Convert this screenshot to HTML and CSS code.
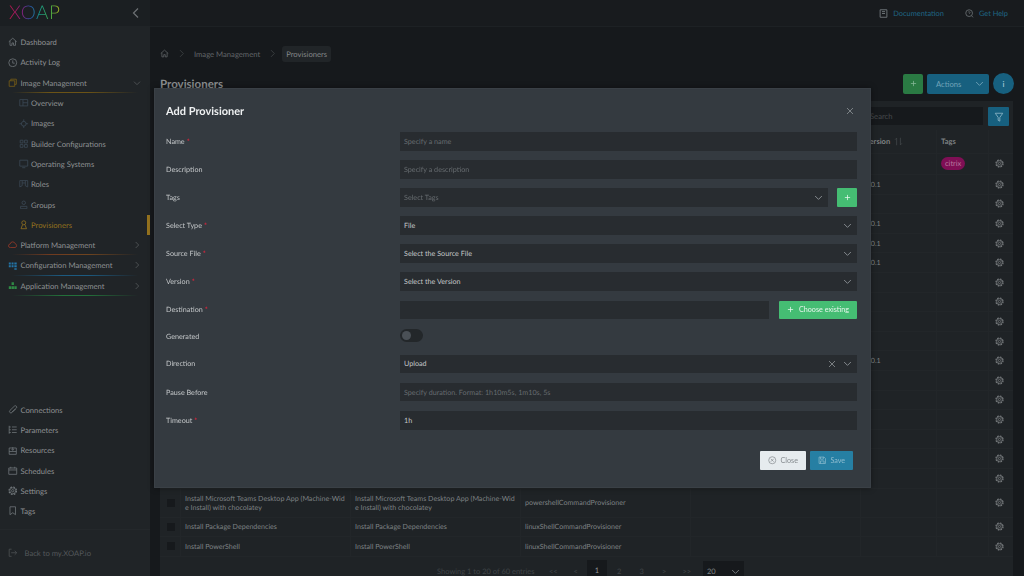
FILE: index.html
```html
<!DOCTYPE html>
<html lang="en">
<head>
  <meta charset="UTF-8">
  <title>Provisioners</title>
  <link rel="stylesheet" href="styles.css">
</head>
<body>
  <svg class="sprites" width="0" height="0">
    <symbol id="gear" viewBox="0 0 24 24"><circle cx="12" cy="12" r="9.500" fill="none" stroke="currentColor" stroke-width="3" stroke-dasharray="4.500 2.960"/><circle cx="12" cy="12" r="7.500" fill="none" stroke="currentColor" stroke-width="2"/><circle cx="12" cy="12" r="3" fill="none" stroke="currentColor" stroke-width="2"/></symbol>
    <symbol id="chev-down" viewBox="0 0 12 12"><path d="M1.500 4l4.500 4.500L10.500 4" fill="none" stroke="currentColor" stroke-width="1.200"/></symbol>
    <symbol id="chev-right" viewBox="0 0 12 12"><path d="M4 1.500L8.500 6 4 10.500" fill="none" stroke="currentColor" stroke-width="1.200"/></symbol>
    <symbol id="cross" viewBox="0 0 12 12"><path d="M1.500 1.500l9 9M10.500 1.500l-9 9" fill="none" stroke="currentColor" stroke-width="1.200"/></symbol>
    <symbol id="plus" viewBox="0 0 12 12"><path d="M6 1.500v9M1.500 6h9" fill="none" stroke="currentColor" stroke-width="1.300"/></symbol>
    <symbol id="box" viewBox="0 0 12 12"><path d="M1.500 1.500h3.500v3.500h-3.500zM7 1.500h3.500v3.500H7zM1.500 7h3.500v3.500h-3.500zM7 7h3.500v3.500H7z" fill="none" stroke="currentColor"/></symbol>
  </svg>

  <div class="app">
    <aside class="sidebar">
      <div class="brand">
        <span class="logo">XOAP</span>
        <svg class="collapse" viewBox="0 0 12 12"><use href="#chev-right" transform="matrix(-1 0 0 1 12 0)"/></svg>
      </div>
      <nav class="nav">
        <a class="item"><svg class="ico" viewBox="0 0 12 12"><path d="M1 6l5-4.500L11 6M2.500 5v5.500h2.500V7.500h2v3h2.500V5" fill="none" stroke="currentColor"/></svg>Dashboard</a>
        <a class="item"><svg class="ico" viewBox="0 0 12 12"><circle cx="6" cy="6" r="5" fill="none" stroke="currentColor"/><path d="M6 3v3.500h2.500" fill="none" stroke="currentColor"/></svg>Activity Log</a>
        <a class="item group amber"><svg class="ico" viewBox="0 0 12 12"><path d="M3.500 3.500V1.500h7v6.500h-2M1.500 3.500h7v7h-7z" fill="none" stroke="currentColor"/></svg><span class="group-label">Image Management</span><svg class="caret" viewBox="0 0 12 12"><use href="#chev-down"/></svg></a>
        <a class="item sub"><svg class="ico" viewBox="0 0 12 12"><path d="M1 2h10v8H1zM5 2v8M5 6h6" fill="none" stroke="currentColor"/></svg>Overview</a>
        <a class="item sub"><svg class="ico" viewBox="0 0 12 12"><circle cx="6" cy="6" r="3" fill="none" stroke="currentColor"/><path d="M6 .5v3M6 8.500v3M.5 6h3M8.500 6h3" stroke="currentColor"/></svg>Images</a>
        <a class="item sub"><svg class="ico" viewBox="0 0 12 12"><use href="#box"/></svg>Builder Configurations</a>
        <a class="item sub"><svg class="ico" viewBox="0 0 12 12"><path d="M1 1.500h10v7.500H1zM4 11h4" fill="none" stroke="currentColor"/></svg>Operating Systems</a>
        <a class="item sub"><svg class="ico" viewBox="0 0 12 12"><path d="M1 2h10v8l-3-1.500V2M1 2v8l3-1.500V2M4 5h4" fill="none" stroke="currentColor"/></svg>Roles</a>
        <a class="item sub"><svg class="ico" viewBox="0 0 12 12"><circle cx="6" cy="3.500" r="2.200" fill="none" stroke="currentColor"/><path d="M2 11V8h8v3z" fill="none" stroke="currentColor"/></svg>Groups</a>
        <a class="item sub current"><svg class="ico" viewBox="0 0 12 12"><circle cx="6" cy="3.500" r="2.500" fill="none" stroke="currentColor"/><path d="M4.500 6L2.500 11h7l-2-5" fill="none" stroke="currentColor"/></svg>Provisioners</a>
        <a class="item group red"><svg class="ico" viewBox="0 0 12 12"><path d="M3 9.500a2.200 2.200 0 0 1-.3-4.400 3.300 3.300 0 0 1 6.400-.4A2.500 2.500 0 0 1 9 9.500z" fill="none" stroke="currentColor"/></svg><span class="group-label">Platform Management</span><svg class="caret" viewBox="0 0 12 12"><use href="#chev-right"/></svg></a>
        <a class="item group blue"><svg class="ico" viewBox="0 0 12 12"><path d="M1 2h2.500v2.500H1zM4.500 2h2.500v2.500H4.500zM8 2h3v2.500H8zM1 5.500h2.500V8H1zM4.500 5.500h2.500V8H4.500zM8 5.500h3V8H8zM8 9h3v2H8z" fill="currentColor"/></svg><span class="group-label">Configuration Management</span><svg class="caret" viewBox="0 0 12 12"><use href="#chev-right"/></svg></a>
        <a class="item group green"><svg class="ico" viewBox="0 0 12 12"><path d="M4.500 1.500h3V5h-3zM1 6.500h3V10H1zM4.500 6.500h3V10h-3zM8 6.500h3V10H8z" fill="currentColor"/></svg><span class="group-label">Application Management</span><svg class="caret" viewBox="0 0 12 12"><use href="#chev-right"/></svg></a>
      </nav>
      <nav class="nav nav-bottom">
        <a class="item"><svg class="ico" viewBox="0 0 12 12"><path d="M9.500 5L5 9.500a1.800 1.800 0 0 1-2.600-2.600L8 1.500a1.200 1.200 0 0 1 2.500 2.500L5 9" fill="none" stroke="currentColor"/></svg>Connections</a>
        <a class="item"><svg class="ico" viewBox="0 0 12 12"><path d="M1.500 1v10M1.500 2.500h2M1.500 6h2M1.500 9.500h2M5 2.500h6M5 6h6M5 9.500h6" fill="none" stroke="currentColor"/></svg>Parameters</a>
        <a class="item"><svg class="ico" viewBox="0 0 12 12"><path d="M1.500 2.500h9v8h-9zM1.500 7h9M6 1.500v4M4.500 4L6 5.500 7.500 4" fill="none" stroke="currentColor"/></svg>Resources</a>
        <a class="item"><svg class="ico" viewBox="0 0 12 12"><path d="M1 2.500h10V10.500H1zM1 5h10M3.500 1v2M8.500 1v2" fill="none" stroke="currentColor"/></svg>Schedules</a>
        <a class="item"><svg class="ico"><use href="#gear"/></svg>Settings</a>
        <a class="item"><svg class="ico" viewBox="0 0 12 12"><path d="M2.500 1h7v10L6 8.500 2.500 11z" fill="none" stroke="currentColor"/></svg>Tags</a>
      </nav>
      <div class="back">
        <svg class="ico" viewBox="0 0 12 12"><path d="M4.500 1.500h-3v9h3M4 6h7M8.500 3.500L11 6 8.500 8.500" fill="none" stroke="currentColor"/></svg>
        <span>Back to my.XOAP.io</span>
      </div>
    </aside>

    <main class="main">
      <header class="topbar">
        <a class="toplink"><svg class="top-ico" viewBox="0 0 12 12"><path d="M1.500 1h9v10h-9zM4 3.500h4M4 6h4" fill="none" stroke="#6c7276" stroke-width="1.300"/></svg>Documentation</a>
        <a class="toplink"><svg class="top-ico" viewBox="0 0 12 12"><circle cx="5.500" cy="5.500" r="4.500" fill="none" stroke="#6c7276" stroke-width="1.100"/><path d="M8.500 9l2.500 2M4.500 4.500a1 1 0 1 1 1.500 1v1" fill="none" stroke="#6c7276"/></svg>Get Help</a>
      </header>

      <div class="crumbs">
        <svg class="crumb-home" viewBox="0 0 12 12"><path d="M1 6l5-4.500L11 6M2.500 5v5.500h2.500V7.500h2v3h2.500V5" fill="none" stroke="currentColor"/></svg>
        <svg class="crumb-sep" viewBox="0 0 12 12"><use href="#chev-right"/></svg>
        <span>Image Management</span>
        <svg class="crumb-sep" viewBox="0 0 12 12"><use href="#chev-right"/></svg>
        <span class="crumb-current">Provisioners</span>
      </div>

      <div class="page-head">
        <h1>Provisioners</h1>
        <div class="page-actions">
          <button class="btn-add"><svg viewBox="0 0 12 12"><use href="#plus"/></svg></button>
          <button class="btn-actions">Actions<svg viewBox="0 0 12 12"><use href="#chev-down"/></svg></button>
          <button class="btn-info">i</button>
        </div>
      </div>

      <section class="card">
        <div class="card-tools">
          <div class="search">Search</div>
          <button class="btn-filter"><svg viewBox="0 0 12 12"><path d="M1.500 1.500h9L7 6.500V11L5 10V6.500z" fill="none" stroke="currentColor"/></svg></button>
        </div>
        <table class="grid">
          <colgroup><col class="c-check"><col class="c-wide"><col class="c-wide"><col class="c-wide"><col class="c-wide"><col class="c-ver"><col class="c-tags"><col></colgroup>
          <thead>
            <tr><th></th><th>Name</th><th>Display Name</th><th>Type</th><th>Description</th><th class="ver-head">Version<svg viewBox="0 0 12 12"><path d="M3.500 11V1.500L1.500 3.500M8.500 1v9.500l2-2" fill="none" stroke="currentColor"/></svg></th><th>Tags</th><th></th></tr>
          </thead>
          <tbody>
            <tr class="first"><td></td><td></td><td></td><td></td><td></td><td></td><td><span class="tag">citrix</span></td><td><svg class="gear"><use href="#gear"/></svg></td></tr>
            <tr><td></td><td></td><td></td><td></td><td></td><td class="ver">1.0.1</td><td></td><td><svg class="gear"><use href="#gear"/></svg></td></tr>
            <tr><td></td><td></td><td></td><td></td><td></td><td></td><td></td><td><svg class="gear"><use href="#gear"/></svg></td></tr>
            <tr><td></td><td></td><td></td><td></td><td></td><td class="ver">1.0.1</td><td></td><td><svg class="gear"><use href="#gear"/></svg></td></tr>
            <tr><td></td><td></td><td></td><td></td><td></td><td class="ver">1.0.1</td><td></td><td><svg class="gear"><use href="#gear"/></svg></td></tr>
            <tr><td></td><td></td><td></td><td></td><td></td><td class="ver">1.0.1</td><td></td><td><svg class="gear"><use href="#gear"/></svg></td></tr>
            <tr><td></td><td></td><td></td><td></td><td></td><td></td><td></td><td><svg class="gear"><use href="#gear"/></svg></td></tr>
            <tr><td></td><td></td><td></td><td></td><td></td><td></td><td></td><td><svg class="gear"><use href="#gear"/></svg></td></tr>
            <tr><td></td><td></td><td></td><td></td><td></td><td></td><td></td><td><svg class="gear"><use href="#gear"/></svg></td></tr>
            <tr><td></td><td></td><td></td><td></td><td></td><td></td><td></td><td><svg class="gear"><use href="#gear"/></svg></td></tr>
            <tr><td></td><td></td><td></td><td></td><td></td><td class="ver">1.0.1</td><td></td><td><svg class="gear"><use href="#gear"/></svg></td></tr>
            <tr><td></td><td></td><td></td><td></td><td></td><td></td><td></td><td><svg class="gear"><use href="#gear"/></svg></td></tr>
            <tr><td></td><td></td><td></td><td></td><td></td><td></td><td></td><td><svg class="gear"><use href="#gear"/></svg></td></tr>
            <tr><td></td><td></td><td></td><td></td><td></td><td></td><td></td><td><svg class="gear"><use href="#gear"/></svg></td></tr>
            <tr><td></td><td></td><td></td><td></td><td></td><td></td><td></td><td><svg class="gear"><use href="#gear"/></svg></td></tr>
            <tr><td></td><td></td><td></td><td></td><td></td><td></td><td></td><td><svg class="gear"><use href="#gear"/></svg></td></tr>
            <tr><td></td><td></td><td></td><td></td><td></td><td></td><td></td><td><svg class="gear"><use href="#gear"/></svg></td></tr>
            <tr class="tall"><td><span class="check"></span></td><td class="name">Install Microsoft Teams Desktop App (Machine-Wide Install) with chocolatey</td><td class="name">Install Microsoft Teams Desktop App (Machine-Wide Install) with chocolatey</td><td>powershellCommandProvisioner</td><td></td><td></td><td></td><td><svg class="gear"><use href="#gear"/></svg></td></tr>
            <tr><td><span class="check"></span></td><td>Install Package Dependencies</td><td>Install Package Dependencies</td><td>linuxShellCommandProvisioner</td><td></td><td></td><td></td><td><svg class="gear"><use href="#gear"/></svg></td></tr>
            <tr><td><span class="check"></span></td><td>Install PowerShell</td><td>Install PowerShell</td><td>linuxShellCommandProvisioner</td><td></td><td></td><td></td><td><svg class="gear"><use href="#gear"/></svg></td></tr>
          </tbody>
        </table>
        <div class="pager">
          <span class="showing">Showing 1 to 20 of 60 entries</span>
          <span class="pg">&lt;&lt;</span><span class="pg">&lt;</span><span class="pg pg-on">1</span><span class="pg">2</span><span class="pg">3</span><span class="pg">&gt;</span><span class="pg">&gt;&gt;</span>
          <span class="pg-size">20<svg viewBox="0 0 12 12"><use href="#chev-down"/></svg></span>
        </div>
      </section>
    </main>
  </div>

  <div class="modal">
    <div class="modal-head">
      <h2>Add Provisioner</h2>
      <svg class="modal-x" viewBox="0 0 12 12"><use href="#cross"/></svg>
    </div>
    <form class="form">
      <label class="lbl">Name<b>*</b></label>
      <div class="field ph">Specify a name</div>

      <label class="lbl">Description</label>
      <div class="field ph">Specify a description</div>

      <label class="lbl">Tags</label>
      <div class="line">
        <div class="field ph">Select Tags<svg class="dd" viewBox="0 0 12 12"><use href="#chev-down"/></svg></div>
        <button type="button" class="btn-green square"><svg viewBox="0 0 12 12"><use href="#plus"/></svg></button>
      </div>

      <label class="lbl">Select Type<b>*</b></label>
      <div class="field">File<svg class="dd" viewBox="0 0 12 12"><use href="#chev-down"/></svg></div>

      <label class="lbl">Source File<b>*</b></label>
      <div class="field">Select the Source File<svg class="dd" viewBox="0 0 12 12"><use href="#chev-down"/></svg></div>

      <label class="lbl">Version<b>*</b></label>
      <div class="field">Select the Version<svg class="dd" viewBox="0 0 12 12"><use href="#chev-down"/></svg></div>

      <label class="lbl">Destination<b>*</b></label>
      <div class="line wide-gap">
        <div class="field"></div>
        <button type="button" class="btn-green choose"><svg viewBox="0 0 12 12"><use href="#plus"/></svg>Choose existing</button>
      </div>

      <label class="lbl">Generated</label>
      <div class="switch-row"><span class="switch"><span class="knob"></span></span></div>

      <label class="lbl">Direction</label>
      <div class="field">Upload<svg class="clear" viewBox="0 0 12 12"><use href="#cross"/></svg><svg class="dd" viewBox="0 0 12 12"><use href="#chev-down"/></svg></div>

      <label class="lbl">Pause Before</label>
      <div class="field ph">Specify duration. Format: 1h10m5s, 1m10s, 5s</div>

      <label class="lbl">Timeout<b>*</b></label>
      <div class="field">1h</div>
    </form>
    <div class="modal-foot">
      <button class="btn-close"><svg viewBox="0 0 12 12"><circle cx="6" cy="6" r="5" fill="none" stroke="currentColor"/><path d="M4 4l4 4M8 4l-4 4" stroke="currentColor"/></svg>Close</button>
      <button class="btn-save"><svg viewBox="0 0 12 12"><path d="M1.500 1.500h7l2 2v7h-9zM3.500 1.500v3h4v-3M3.500 10.500V7h5v3.500" fill="none" stroke="currentColor"/></svg>Save</button>
    </div>
  </div>
</body>
</html>
```

FILE: styles.css
```css
* {
  box-sizing: border-box;
}
html, body {
  margin: 0;
  height: 576px;
  overflow: hidden;
}
body {
  font-family: Lato, "Open Sans", sans-serif;
  font-size: 7.650px;
  text-rendering: geometricPrecision;
  background: #16191c;
  color: #8f9294;
}
button {
  font: inherit;
  border: 0;
  padding: 0;
}
.sprites {
  position: absolute;
}
.app {
  display: flex;
  height: 576px;
}

/* sidebar */
.sidebar {
  width: 150px;
  flex: none;
  display: flex;
  flex-direction: column;
  background: #202427;
}
.brand {
  height: 26px;
  flex: none;
  display: flex;
  align-items: center;
  justify-content: space-between;
  padding: 0 8px 0 9px;
  background: #1b1f22;
}
.logo {
  font-weight: 300;
  font-size: 19px;
  line-height: 26px;
  letter-spacing: .5px;
  background: linear-gradient(90deg, #c0184a, #8a1e7a 25%, #2a55a8 42%, #179a8a 60%, #3fa848 80%, #a8b01e);
  -webkit-background-clip: text;
  background-clip: text;
  color: transparent;
}
.collapse {
  width: 12px;
  height: 12px;
  color: #6d7174;
}
.nav {
  padding-top: 6px;
}
.nav-bottom {
  margin-top: auto;
  padding-top: 0;
  padding-bottom: 8px;
}
.nav-bottom .item {
  height: 20.200px;
}
.item {
  position: relative;
  display: flex;
  align-items: center;
  height: 20.300px;
  padding-left: 8px;
}
.ico {
  width: 9.500px;
  height: 9.500px;
  margin-right: 3px;
  flex: none;
  color: #70767a;
}
.sub {
  padding-left: 19px;
}
.sub .ico {
  margin-right: 2.500px;
  color: #3c4a56;
}
.current, .current .ico {
  color: #94721e;
}
.current::after {
  content: "";
  position: absolute;
  right: 0;
  top: 0;
  width: 3px;
  height: 100%;
  background: #94721e;
}
.caret {
  width: 8px;
  height: 8px;
  margin-left: auto;
  margin-right: 9px;
  color: #55595c;
}
.group::before {
  content: "";
  position: absolute;
  left: 12px;
  right: 12px;
  bottom: 0;
  height: 1px;
}
.amber::before { background: linear-gradient(90deg, transparent, #6b5316 30%, #6b5316 60%, transparent); }
.red::before { background: linear-gradient(90deg, transparent, #6f3a1f 30%, #6f441f 60%, transparent); }
.blue::before { background: linear-gradient(90deg, transparent, #1c5a80 40%, #1c5a80 60%, transparent); }
.green::before { background: linear-gradient(90deg, transparent, #23703a 40%, #23703a 60%, transparent); }
.amber .ico { color: #7a5f16; }
.red .ico { color: #9a3a28; }
.blue .ico { color: #2375a8; }
.green .ico { color: #2f8a45; }
.back {
  height: 47px;
  flex: none;
  display: flex;
  align-items: center;
  padding-left: 8px;
  border-top: 1px solid #24282b;
  color: #54585b;
}
.back .ico {
  color: #4d5154;
  margin-right: 7px;
}

/* main */
.main {
  flex: 1;
  min-width: 0;
  display: flex;
  flex-direction: column;
}
.topbar {
  height: 27px;
  flex: none;
  display: flex;
  justify-content: flex-end;
  align-items: center;
  gap: 21px;
  padding: 1px 16px 0 0;
  background: #181b1e;
  border-bottom: 1px solid #1d2124;
}
.toplink {
  display: flex;
  align-items: center;
  font-size: 7.400px;
  color: #1f6685;
}
.top-ico {
  width: 9px;
  height: 9px;
  margin-right: 5px;
}
.crumbs {
  display: flex;
  align-items: center;
  margin: 18px 0 0 10px;
  height: 17px;
  color: #63676a;
}
.crumb-home {
  width: 9px;
  height: 9px;
  color: #63676a;
}
.crumb-sep {
  width: 9px;
  height: 9px;
  margin: 0 8px;
  color: #3a3e41;
}
.crumb-current {
  margin-left: -3px;
  padding: 3px 4px;
  border-radius: 3px;
  background: #212528;
  color: #85888a;
}
.page-head {
  display: flex;
  justify-content: space-between;
  align-items: center;
  height: 21px;
  margin: 11px 10px 0 10px;
}
h1 {
  margin: 2px 0 0;
  font-size: 11.500px;
  font-weight: 700;
  color: #8b8e90;
}
.page-actions {
  display: flex;
  align-items: center;
  gap: 4px;
}
.btn-add {
  width: 20px;
  height: 20px;
  border-radius: 2px;
  background: #2a7a43;
  color: #86b896;
  display: flex;
  align-items: center;
  justify-content: center;
}
.btn-add svg {
  width: 7px;
  height: 7px;
}
.btn-actions {
  width: 62px;
  height: 20px;
  border-radius: 2px;
  background: #17607f;
  color: #71a3b8;
  display: flex;
  align-items: center;
  justify-content: space-between;
  padding: 0 5px 0 9px;
}
.btn-actions svg {
  width: 9px;
  height: 9px;
}
.btn-info {
  width: 21px;
  height: 21px;
  border-radius: 50%;
  background: #17607f;
  color: #9dc2d1;
  font-weight: 700;
}
.card {
  margin: 7px 11px 0 10px;
  background: #1f2326;
  flex: 1;
  min-height: 0;
}
.card-tools {
  display: flex;
  justify-content: flex-end;
  gap: 5px;
  padding: 6px 4px 0 0;
  height: 29px;
}
.search {
  width: 180px;
  height: 18px;
  background: #16191c;
  color: #46494c;
  line-height: 18px;
  text-indent: 67px;
}
.btn-filter {
  width: 21px;
  height: 19px;
  border-radius: 1px;
  background: #17607f;
  color: #8db6c7;
  display: flex;
  align-items: center;
  justify-content: center;
}
.btn-filter svg {
  width: 10px;
  height: 10px;
}
.grid {
  width: 100%;
  table-layout: fixed;
  border-collapse: collapse;
  font-size: 7.100px;
  line-height: 9px;
}
.c-check { width: 20px; }
.c-wide { width: 170px; }
.c-ver { width: 76px; }
.c-tags { width: 52px; }
th {
  height: 23px;
  text-align: left;
  font-weight: 700;
  color: #7e8284;
  font-size: 7.500px;
  padding: 0 4.500px;
  border-bottom: 1px solid #222629;
}
th + th, td + td {
  border-left: 1px solid #222629;
}
td {
  height: 19.600px;
  padding: 0 4.500px;
  border-bottom: 1px solid #222629;
  color: #7d8183;
}
.first td {
  height: 21.500px;
}
.tall td {
  height: 29px;
}
.name {
  word-break: break-all;
}
.ver-head {
  white-space: nowrap;
}
.ver-head svg {
  width: 9px;
  height: 9px;
  margin-left: 4px;
  vertical-align: -2px;
  color: #44484b;
}
.tag {
  display: inline-block;
  padding: 2px 4px;
  border-radius: 7px;
  background: #7f0f55;
  color: #b77a9f;
  font-size: 7.500px;
}
.gear {
  display: block;
  width: 9px;
  height: 9px;
  margin: 0 auto;
  color: #7a7e80;
}
td:last-child {
  padding: 0 2px 0 0;
}
.check {
  display: block;
  width: 8px;
  height: 8px;
  margin-left: 2px;
  background: #16191c;
}
.pager {
  display: flex;
  align-items: center;
  height: 22px;
  padding-top: 7px;
  margin-left: 277px;
  font-size: 7.500px;
  color: #3f4346;
}
.showing {
  width: 105px;
}
.pg {
  width: 22.500px;
  text-align: center;
}
.pg-on {
  width: 20px;
  margin: 0 1px 0 0;
  height: 22px;
  line-height: 22px;
  background: #16191c;
  color: #8f9294;
}
.pg-size {
  display: flex;
  align-items: center;
  justify-content: space-between;
  width: 41px;
  height: 20px;
  margin-left: 5px;
  padding: 0 4px;
  background: #16191c;
  color: #7d8183;
}
.pg-size svg {
  width: 9px;
  height: 9px;
}

/* modal */
.modal {
  position: fixed;
  left: 154px;
  top: 88px;
  width: 717px;
  height: 400px;
  background: #343a40;
  border: 1px solid #3a4046;
  font-size: 7.200px;
  color: #c3c6c8;
  box-shadow: 0 0 6px rgba(0, 0, 0, .4);
}
.modal-head {
  display: flex;
  justify-content: space-between;
  align-items: center;
  padding: 1px 16px 0 11px;
  height: 43px;
}
h2 {
  margin: 0;
  font-size: 11px;
  font-weight: 700;
  color: #eef0f1;
}
.modal-x {
  width: 8px;
  height: 8px;
  color: #8e9397;
}
.form {
  display: grid;
  grid-template-columns: 234px 457px;
  row-gap: 9.300px;
  padding-left: 11px;
  align-items: center;
}
.lbl {
  color: #c3c6c8;
}
.lbl b {
  margin-left: 2px;
  color: #d8243c;
  font-weight: 700;
}
.field {
  position: relative;
  display: flex;
  align-items: center;
  flex: 1;
  height: 18.800px;
  padding-left: 4px;
  background: #282c30;
  color: #c3c6c8;
}
.ph {
  color: #666b6f;
}
.dd {
  position: absolute;
  right: 5px;
  width: 9px;
  height: 9px;
  color: #8e9397;
}
.clear {
  position: absolute;
  right: 21px;
  width: 8px;
  height: 8px;
  color: #8e9397;
}
.line {
  display: flex;
  gap: 9px;
}
.wide-gap {
  gap: 10px;
}
.btn-green {
  background: #45bd73;
  color: #e6f6ec;
  border-radius: 1px;
  display: flex;
  align-items: center;
  justify-content: center;
  flex: none;
}
.btn-green svg {
  width: 7px;
  height: 7px;
}
.square {
  width: 20px;
  height: 18.800px;
}
.choose {
  width: 78px;
  height: 18.800px;
}
.choose svg {
  margin-right: 5px;
}
.switch-row {
  height: 14.600px;
  margin-bottom: 2px;
}
.switch {
  display: block;
  width: 23px;
  height: 13px;
  border-radius: 7px;
  background: #23272a;
  padding: 2px;
}
.knob {
  display: block;
  width: 9px;
  height: 9px;
  border-radius: 50%;
  background: #4a5056;
}
.modal-foot {
  position: absolute;
  right: 17px;
  bottom: 17px;
  display: flex;
  gap: 4px;
}
.btn-close, .btn-save {
  height: 19px;
  display: flex;
  align-items: center;
  justify-content: center;
  border-radius: 1px;
}
.btn-close svg, .btn-save svg {
  width: 8.500px;
  height: 8.500px;
  margin-right: 4px;
}
.btn-close {
  width: 46px;
  background: #e6ebee;
  color: #868b8f;
}
.btn-save {
  width: 43px;
  background: #267fa3;
  color: #8dbccf;
}
```
